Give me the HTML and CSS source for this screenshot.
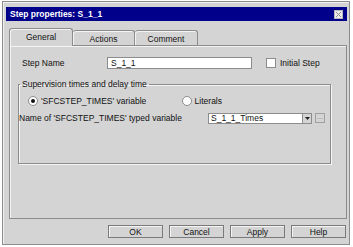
FILE: index.html
```html
<!DOCTYPE html>
<html lang="en">
<head>
  <meta charset="UTF-8" />
  <title>Step properties: S_1_1</title>
  <link rel="stylesheet" href="styles.css">
</head>
<body>
  <div class="dialog">
    <div class="titlebar">
      <span class="title">Step properties: S_1_1</span>
      <span class="close">
        <svg width="7" height="7" viewBox="0 0 7 7"><path d="M1 1L6 6M6 1L1 6" stroke="#8c8c8c" stroke-width="1" fill="none"/></svg>
      </span>
    </div>

    <div class="tabs">
      <div class="tab active">General</div>
      <div class="tab tab-actions">Actions</div>
      <div class="tab tab-comment">Comment</div>
    </div>

    <div class="panel">
      <div class="name-row">
        <span class="label">Step Name</span>
        <div class="textbox">S_1_1</div>
        <span class="check"></span>
        <span class="check-label">Initial Step</span>
      </div>

      <fieldset class="group">
        <legend>Supervision times and delay time</legend>
        <div class="radio-row">
          <span class="radio-item"><span class="radio on"></span>'SFCSTEP_TIMES' variable</span>
          <span class="radio-item literals"><span class="radio"></span>Literals</span>
        </div>
        <div class="var-row">
          <span class="var-label">Name of 'SFCSTEP_TIMES' typed variable</span>
          <div class="combo">
            <span class="combo-text">S_1_1_Times</span>
            <span class="combo-arrow">
              <svg width="5" height="3" viewBox="0 0 5 3"><path d="M0 0H5L2.5 3Z" fill="#222"/></svg>
            </span>
          </div>
          <span class="dots">...</span>
        </div>
      </fieldset>
    </div>

    <div class="buttons">
      <button>OK</button>
      <button>Cancel</button>
      <button>Apply</button>
      <button>Help</button>
    </div>
  </div>
</body>
</html>
```

FILE: styles.css
```css
body {
  margin: 0;
  background: #ffffff;
  font-family: "Liberation Sans", Arial, sans-serif;
  font-size: 8.5px;
  color: #111;
}

.dialog {
  box-sizing: border-box;
  margin: 1px 0 0 2px;
  width: 348px;
  height: 244px;
  background: #d4d4d4;
  border: 1px solid #8c8c8c;
  box-shadow: inset 1px 1px 0 #f0f0f0;
  display: flex;
  flex-direction: column;
}

.titlebar {
  margin: 5px 0 0 3px;
  width: 341px;
  height: 14px;
  background: #00008a;
  display: flex;
  align-items: center;
  justify-content: space-between;
}

.title {
  color: #fff;
  font-weight: bold;
  padding-left: 4px;
}

.close {
  box-sizing: border-box;
  width: 9px;
  height: 9px;
  margin-right: 4px;
  background: #ececec;
  border: 1px solid #b8b8b8;
  display: flex;
  align-items: center;
  justify-content: center;
}

.tabs {
  margin: 7px 0 -1px 6px;
  display: flex;
  align-items: flex-end;
}

.tab {
  box-sizing: border-box;
  height: 16px;
  border: 1px solid #8c8c8c;
  border-bottom: none;
  border-radius: 3px 3px 0 0;
  box-shadow: inset 1px 1px 0 #f4f4f4;
  background: #d4d4d4;
  text-align: center;
  padding-top: 3px;
}

.tab.active {
  width: 64px;
  height: 18px;
  padding-top: 3px;
  position: relative;
  z-index: 1;
}

.tab-actions {
  width: 62px;
  border-left: none;
}

.tab-comment {
  width: 63px;
  border-left: none;
}

.panel {
  box-sizing: border-box;
  margin-left: 6px;
  width: 338px;
  height: 174px;
  border: 1px solid #8c8c8c;
  box-shadow: inset 1px 1px 0 #f4f4f4;
  padding: 11px 0 0 12px;
}

.name-row {
  display: flex;
  align-items: center;
  height: 12px;
}

.label {
  width: 85px;
}

.textbox {
  box-sizing: border-box;
  width: 145px;
  height: 12px;
  background: #fff;
  border: 1px solid #8c8c8c;
  padding-left: 3px;
  line-height: 10px;
}

.check {
  box-sizing: border-box;
  width: 10px;
  height: 10px;
  margin-left: 14px;
  background: #fff;
  border: 1px solid #8c8c8c;
}

.check-label {
  margin-left: 4px;
}

.group {
  box-sizing: border-box;
  margin: 10px 0 0 -4px;
  width: 313px;
  height: 85px;
  padding: 6px 0 0 0;
  border: 1px solid #8c8c8c;
  box-shadow: 1px 1px 0 #f4f4f4, inset 1px 1px 0 #f4f4f4;
}

.group legend {
  padding: 0 2px;
  margin-left: 1px;
  line-height: 10px;
}

.radio-row {
  display: flex;
  align-items: center;
  height: 12px;
  padding-left: 9px;
}

.radio-item {
  display: flex;
  align-items: center;
}

.literals {
  margin-left: auto;
  margin-right: 108px;
}

.radio {
  box-sizing: border-box;
  width: 10px;
  height: 10px;
  border-radius: 50%;
  background: #fff;
  border: 1px solid #8c8c8c;
  margin-right: 3px;
  display: flex;
  align-items: center;
  justify-content: center;
}

.radio.on::after {
  content: "";
  width: 4px;
  height: 4px;
  border-radius: 50%;
  background: #111;
}

.var-row {
  display: flex;
  align-items: center;
  height: 12px;
  margin-top: 5px;
}

.var-label {
  width: 189px;
  white-space: nowrap;
}

.combo {
  box-sizing: border-box;
  width: 104px;
  height: 11px;
  background: #fff;
  border: 1px solid #8c8c8c;
  display: flex;
  align-items: center;
}

.combo-text {
  flex: 1;
  padding-left: 2px;
  line-height: 9px;
}

.combo-arrow {
  box-sizing: border-box;
  width: 9px;
  height: 9px;
  background: #d4d4d4;
  border-left: 1px solid #8c8c8c;
  display: flex;
  align-items: center;
  justify-content: center;
}

.dots {
  box-sizing: border-box;
  width: 10px;
  height: 10px;
  margin-left: 3px;
  border: 1px solid #a0a0a0;
  color: #888;
  font-size: 7px;
  line-height: 6px;
  text-align: center;
}

.buttons {
  margin: 6px 0 0 105px;
  display: flex;
  gap: 6px;
}

button {
  box-sizing: border-box;
  width: 55px;
  height: 13px;
  padding: 0;
  font-family: "Liberation Sans", Arial, sans-serif;
  font-size: 8.5px;
  color: #111;
  background: #d4d4d4;
  border: 1px solid #7a7a7a;
  box-shadow: inset 1px 1px 0 #f4f4f4;
  border-radius: 0;
}
```
